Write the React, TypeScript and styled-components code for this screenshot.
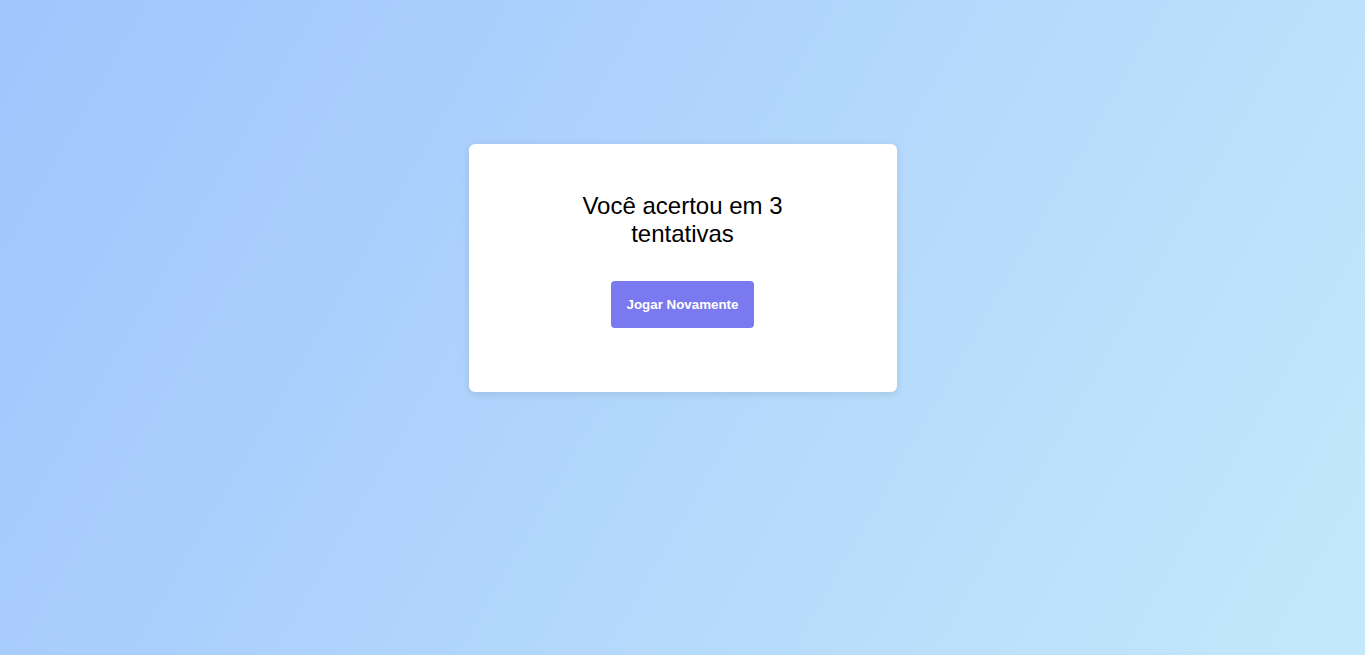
import styled, { createGlobalStyle } from "styled-components";

const GlobalStyle = createGlobalStyle`
  * {
    box-sizing: border-box;
  }

  html,
  body {
    margin: 0;
    padding: 0;
    height: 100%;
  }

  body {
    font-family: "Liberation Sans", Arial, sans-serif;
    background: linear-gradient(120deg, #a1c4fd 0%, #c2e9fb 100%);
    background-attachment: fixed;
    min-height: 100vh;
  }
`;

const Page = styled.main`
  min-height: 100vh;
  display: flex;
  justify-content: center;
  align-items: flex-start;
  padding-top: 144px;
`;

const Card = styled.section`
  width: 428px;
  height: 248px;
  background: #ffffff;
  border-radius: 6px;
  box-shadow: 0 2px 8px rgba(0, 0, 0, 0.1);
  padding: 48px 0 0;
  display: flex;
  flex-direction: column;
  align-items: center;
  gap: 33px;
`;

const Title = styled.h2`
  margin: 0;
  max-width: 250px;
  font-size: 24px;
  font-weight: 400;
  line-height: normal;
  color: #000000;
  text-align: center;
`;

const Button = styled.button`
  border: none;
  border-radius: 4px;
  background: #7a79ef;
  color: #ffffff;
  font-family: "Liberation Sans", Arial, sans-serif;
  font-size: 13.333px;
  font-weight: 700;
  line-height: 15px;
  height: 47px;
  padding: 0 16px;
  cursor: pointer;
`;

export default function App() {
  const attempts = 3;
  return (
    <>
      <GlobalStyle />
      <Page>
        <Card>
          <Title>Você acertou em {attempts} tentativas</Title>
          <Button type="button">Jogar Novamente</Button>
        </Card>
      </Page>
    </>
  );
}
